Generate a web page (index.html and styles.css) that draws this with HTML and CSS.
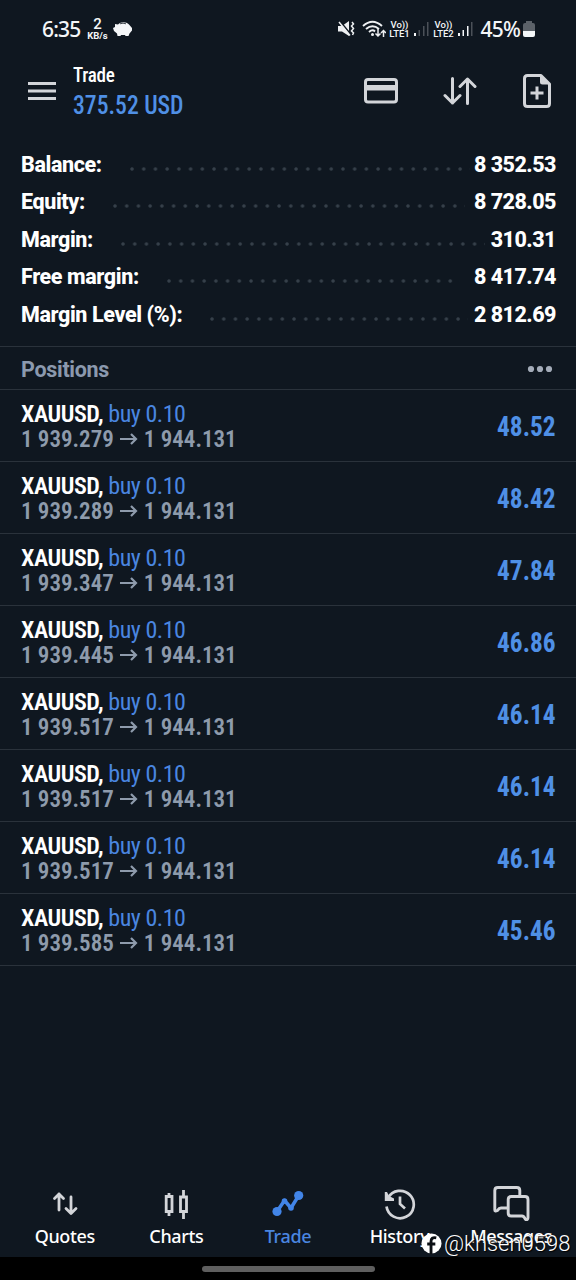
FILE: index.html
```html
<!DOCTYPE html>
<html lang="en">
<head>
  <meta charset="UTF-8">
  <meta name="viewport" content="width=device-width, initial-scale=1.0">
  <title>Trade</title>
  <link rel="stylesheet" href="styles.css">
</head>
<body>
  <div class="screen">
    <!-- Status bar -->
    <div class="status-bar">
      <span class="clock">6:35</span>
      <span class="net-speed"><b>2</b><small>KB/s</small></span>
      <svg class="piggy" width="20" height="16" viewBox="0 0 20 16">
        <path d="M0 7L2 6 2 3 5 3.500C8 .5 13 .5 16 3.500L19 7V9.500L16.500 12.500 15.500 15H12.500L12 14H8L7.500 15H4.500L4 12.500 1 10z" fill="#f4f6f8"/>
        <path d="M7 2.800Q10 1.500 13 2.800" fill="none" stroke="#0f1720" stroke-width=".8"/>
      </svg>
      <svg class="mute" width="17" height="18" viewBox="0 0 17 18">
        <path d="M0 6H4L11 1V16L4 11.500H0z" fill="#eef0f2"/>
        <path d="M1 0L14 16" stroke="#0f1720" stroke-width="1.800"/>
        <path d="M1 2L12 15.500M14 2l1.500 2-2 2 2 2.500-2 2.500 2 2-1 2" fill="none" stroke="#eef0f2" stroke-width="1.500"/>
      </svg>
      <svg class="wifi" width="24" height="18" viewBox="0 0 24 18">
        <g fill="none" stroke="#eef0f2" stroke-width="1.900">
          <path d="M1 6Q10.500-2.500 20 6M4 9Q10.500 3.500 17 9M7 12Q10.500 9 13 11.500"/>
          <path d="M16 9V16M13.500 13.500L16 16 18.500 13.500M21.500 17V10.500M19 13L21.500 10.500 24 13" stroke-width="1.500"/>
        </g>
        <circle cx="10.500" cy="14.500" r="1.500" fill="#eef0f2"/>
      </svg>
      <span class="lte"><b>Vo))</b><b>LTE1</b></span>
      <svg class="signal" width="16" height="16" viewBox="0 0 16 16">
        <path d="M0 12h2v3H0z" fill="#f4f6f8"/>
        <path d="M4.500 9h1.500v6H4.500zM9 5h1.500v10H9zM13 1h1.500v14H13z" fill="#4b5158"/>
      </svg>
      <span class="lte"><b>Vo))</b><b>LTE2</b></span>
      <svg class="signal" width="16" height="16" viewBox="0 0 16 16">
        <path d="M0 12h2v3H0zM4.500 9h1.500v6H4.500zM9 5h1.500v10H9z" fill="#f4f6f8"/>
        <path d="M13 1h1.500v14H13z" fill="#4b5158"/>
      </svg>
      <span class="percent">45%</span>
      <svg class="battery" width="12" height="18" viewBox="0 0 12 18">
        <path d="M3 3V1h6v2h1q2 0 2 2v6H0V5q0-2 2-2z" fill="#5c6269"/>
        <path d="M0 11h12v4q0 2-2 2H2q-2 0-2-2z" fill="#f4f6f8"/>
      </svg>
    </div>

    <!-- Header -->
    <header class="header">
      <svg class="menu" width="28" height="20" viewBox="0 0 28 20">
        <path d="M0 2.500H28M0 10H28M0 17.500H28" stroke="#d3d5d9" stroke-width="2.800"/>
      </svg>
      <div class="title">
        <h1>Trade</h1>
        <p>375.52 USD</p>
      </div>
      <div class="actions">
        <svg class="card" width="34" height="26" viewBox="0 0 34 26">
          <rect x="1.500" y="1.500" width="31" height="22.500" rx="2.500" fill="none" stroke="#d3d5d9" stroke-width="3"/>
          <path d="M1 7H33V12.500H1z" fill="#d3d5d9"/>
        </svg>
        <svg width="34" height="28" viewBox="0 0 34 28">
          <path d="M9.500 1.500V26M2 18.500L9.500 26 17 18.500M24.500 26.500V2M17 9.500L24.500 2 32 9.500" fill="none" stroke="#d3d5d9" stroke-width="3" stroke-linecap="round" stroke-linejoin="round"/>
        </svg>
        <svg width="28" height="34" viewBox="0 0 28 34">
          <path d="M4.500 1.500H18L26.500 10V29.500Q26.500 32.500 23.500 32.500H4.500Q1.500 32.500 1.500 29.500V4.500Q1.500 1.500 4.500 1.500z" fill="none" stroke="#d3d5d9" stroke-width="3" stroke-linejoin="round"/>
          <path d="M17 1V8Q17 10.500 19.500 10.500H27zM12.500 12.500h3v5h5v3h-5v5h-3v-5h-5v-3h5z" fill="#d3d5d9"/>
        </svg>
      </div>
    </header>

    <main>
      <!-- Account summary -->
      <section class="account">
        <div class="line"><span>Balance:</span><i class="dots"></i><span class="value">8 352.53</span></div>
        <div class="line"><span>Equity:</span><i class="dots"></i><span class="value">8 728.05</span></div>
        <div class="line"><span>Margin:</span><i class="dots"></i><span class="value">310.31</span></div>
        <div class="line"><span>Free margin:</span><i class="dots"></i><span class="value">8 417.74</span></div>
        <div class="line"><span>Margin Level (%):</span><i class="dots"></i><span class="value">2 812.69</span></div>
      </section>

      <!-- Open positions -->
      <div class="section-head">
        <h2>Positions</h2>
        <svg width="26" height="8" viewBox="0 0 26 8"><g fill="#a4acb9"><circle cx="4" cy="4" r="3.100"/><circle cx="13" cy="4" r="3.100"/><circle cx="22" cy="4" r="3.100"/></g></svg>
      </div>
      <ul class="positions"></ul>
    </main>

    <!-- Bottom tabs -->
    <nav class="tabs">
      <a class="tab">
        <svg width="36" height="36" viewBox="0 0 36 36"><path d="M12 26V10M7.500 14.500L12 10 16.500 14.500M24 13V29.500M19 24.500L24 29.500 29 24.500" fill="none" stroke="#d3d5d9" stroke-width="2.800" stroke-linecap="round" stroke-linejoin="round"/></svg>
        <span>Quotes</span>
      </a>
      <a class="tab">
        <svg width="36" height="36" viewBox="0 0 36 36"><path d="M8.200 12.500h5.800v15H8.200zM22.500 13h6v14.500h-6zM11 9v3M11 28v4M25.500 6v6M25.500 28v7" fill="none" stroke="#d3d5d9" stroke-width="2.800"/></svg>
        <span>Charts</span>
      </a>
      <a class="tab active">
        <svg width="36" height="36" viewBox="0 0 36 36"><path d="M7 27.500L14.500 16.500 21 24 28.700 11.500" fill="none" stroke="#4285e8" stroke-width="3.500" stroke-linejoin="round"/><g fill="#4285e8"><circle cx="7" cy="27.500" r="4.600"/><circle cx="14.500" cy="17" r="2.800"/><circle cx="21" cy="24" r="2.800"/><circle cx="28.700" cy="11.500" r="4.600"/></g></svg>
        <span>Trade</span>
      </a>
      <a class="tab">
        <svg width="36" height="36" viewBox="0 0 36 36"><path d="M6 14A13.700 13.700 0 1 1 4.500 22.500M18 12.500V20L23 24.500" fill="none" stroke="#d3d5d9" stroke-width="2.700"/><path d="M2.800 8L5 8 7 12 12 14.500V17H2.800z" fill="#d3d5d9"/></svg>
        <span>History</span>
      </a>
      <a class="tab">
        <svg width="38" height="38" viewBox="0 0 38 38"><g fill="#0f1720" stroke="#d3d5d9" stroke-width="2.900" stroke-linejoin="round"><path d="M2.800 27V7.500Q2.800 4.500 5.800 4.500H24.800Q27.800 4.500 27.800 7.500V25H9Q7 25 5.500 27.500Q2.800 29 2.800 27z"/><path d="M16.200 16.500Q16.200 13.500 19.200 13.500H33Q36 13.500 36 16.500V34.500Q36 37 33.500 36.500Q32 33 30 33H19.200Q16.200 33 16.200 30z"/></g></svg>
        <span>Messages</span>
      </a>
    </nav>

    <div class="gesture-bar"><span></span></div>

    <!-- Owner tag over the tabs -->
    <div class="watermark">
      <svg width="21" height="22" viewBox="0 0 22 23"><circle cx="11" cy="11" r="10.500" fill="#fff"/><path d="M16 5Q10.500 4 10.500 9V22M6.500 11.500H15" fill="none" stroke="#0b0f14" stroke-width="3"/></svg>
      <span>@khsen0598</span>
    </div>
  </div>

  <script>
    const positions = [
      { open: "1 939.279", profit: "48.52" },
      { open: "1 939.289", profit: "48.42" },
      { open: "1 939.347", profit: "47.84" },
      { open: "1 939.445", profit: "46.86" },
      { open: "1 939.517", profit: "46.14" },
      { open: "1 939.517", profit: "46.14" },
      { open: "1 939.517", profit: "46.14" },
      { open: "1 939.585", profit: "45.46" }
    ];
    const current = "1 944.131";

    document.querySelector(".positions").innerHTML = positions.map(p => `
      <li class="position">
        <div class="deal">
          <p class="symbol"><b>XAUUSD,</b> <span>buy 0.10</span></p>
          <p class="prices"><span>${p.open}</span><svg width="18" height="14" viewBox="0 0 18 14"><path d="M0 6H16M11 1L16 6 11 11" fill="none" stroke="#8e9bac" stroke-width="2.200"/></svg><span>${current}</span></p>
        </div>
        <span class="profit">${p.profit}</span>
      </li>
    `).join("");
  </script>
</body>
</html>
```
FILE: styles.css
```css
* {
  box-sizing: border-box;
  margin: 0;
  padding: 0;
}

body {
  background-color: #0f1720;
  font-family: Roboto, sans-serif;
  color: #fff;
}

svg {
  display: block;
  flex: none;
}

.screen {
  position: relative;
  display: flex;
  flex-direction: column;
  width: 576px;
  height: 1280px;
  overflow: hidden;
}

/* Status bar */
.status-bar {
  display: flex;
  align-items: center;
  height: 57px;
  padding: 0 41px 0 42px;
  white-space: nowrap;
  color: #f4f6f8;
}

.clock {
  width: 45px;
  font: 500 21px "Noto Sans", sans-serif;
  letter-spacing: -0.8px;
}

.net-speed {
  display: flex;
  flex-direction: column;
  align-items: center;
  width: 21px;
}

.net-speed b {
  font-size: 15px;
  font-weight: 500;
  line-height: 14px;
}

.net-speed small {
  font-size: 9.5px;
  font-weight: 700;
  line-height: 10px;
}

.piggy {
  margin-left: 5px;
}

.mute {
  margin-left: auto;
}

.wifi {
  margin-left: 7px;
}

.lte {
  display: flex;
  flex-direction: column;
  align-items: center;
  width: 22px;
  margin: 0 4px 0 2px;
}

.lte b {
  font-size: 9.5px;
  font-weight: 500;
  line-height: 9px;
}

.percent {
  margin: 0 3px 0 6px;
  font: 500 21px "Noto Sans", sans-serif;
  letter-spacing: -0.8px;
}

/* Header */
.header {
  display: flex;
  align-items: center;
  height: 68px;
  padding: 0 25px 0 28px;
}

.title {
  margin: -3px 0 0 17px;
  font-stretch: 75%;
  transform: scaleX(0.91);
  transform-origin: left;
}

.title h1 {
  font-size: 21px;
  font-weight: 500;
  line-height: 30px;
  letter-spacing: -0.3px;
}

.title p {
  font-size: 26px;
  font-weight: 500;
  line-height: 30px;
  color: #4f90e6;
}

.actions {
  display: flex;
  align-items: center;
  gap: 46px;
  margin-left: auto;
}

.card {
  margin-right: -1px;
}

/* Account summary */
.account {
  height: 221px;
  padding: 21px 20px 0 21px;
}

.line {
  display: flex;
  height: 37.4px;
  line-height: 38px;
  font-size: 21.5px;
  font-weight: 800;
  letter-spacing: -0.38px;
  white-space: nowrap;
}

.value {
  letter-spacing: -0.5px;
}

.dots {
  flex: 1;
  margin: 0 4px 0 28px;
}

/* Leader keeps whole dots only */
.dots::before {
  content: "";
  display: block;
  width: round(down, 100%, 11.73px);
  height: 4px;
  margin-top: 21px;
  background: radial-gradient(circle at 2px 2px, #36404a 1.2px, transparent 2.2px) 0 0 / 11.73px 4px repeat-x;
}

/* Positions */
.section-head {
  display: flex;
  align-items: center;
  justify-content: space-between;
  height: 44px;
  padding: 2px 23px 0 21px;
  border-top: 1px solid #2a323b;
  border-bottom: 1px solid #2a323b;
}

.section-head h2 {
  font-size: 21.5px;
  font-weight: 700;
  letter-spacing: -0.3px;
  color: #8b99ae;
}

.positions {
  list-style: none;
  font-stretch: 75%;
}

.position {
  display: flex;
  align-items: center;
  justify-content: space-between;
  height: 72px;
  padding: 2px 20px 0 21px;
  border-bottom: 1px solid #2a323b;
}

.symbol {
  font-size: 24px;
  line-height: 26px;
  letter-spacing: -0.45px;
}

.symbol b {
  font-weight: 600;
}

.symbol span {
  color: #4a86e0;
}

.prices {
  display: flex;
  align-items: center;
  font-size: 23px;
  font-weight: 600;
  line-height: 25px;
  color: #8e9bac;
}

.prices svg {
  margin: 0 6px;
}

.profit {
  font-size: 27.5px;
  font-weight: 700;
  color: #4f90e6;
  transform: scaleX(0.92);
  transform-origin: right;
}

/* Bottom tabs */
.tabs {
  display: flex;
  justify-content: space-between;
  margin-top: auto;
  height: 74px;
  padding: 0 9px;
}

.tab {
  display: flex;
  flex-direction: column;
  align-items: center;
  width: 112px;
  font: 500 18px "Noto Sans", sans-serif;
  letter-spacing: -0.35px;
}

.tab svg {
  height: 38px;
}

.tab span {
  line-height: 30px;
}

.tab.active {
  color: #4a86e0;
}

.gesture-bar {
  display: flex;
  justify-content: center;
  height: 23px;
  padding-top: 9px;
  background-color: #000;
}

.gesture-bar span {
  width: 173px;
  height: 6px;
  border-radius: 3px;
  background-color: #5f5f5f;
}

.watermark {
  position: absolute;
  left: 421px;
  top: 1231px;
  display: flex;
  align-items: center;
  gap: 2px;
  font: 300 22px Roboto, sans-serif;
  text-shadow: 1px 1px 1px #000;
}
```
